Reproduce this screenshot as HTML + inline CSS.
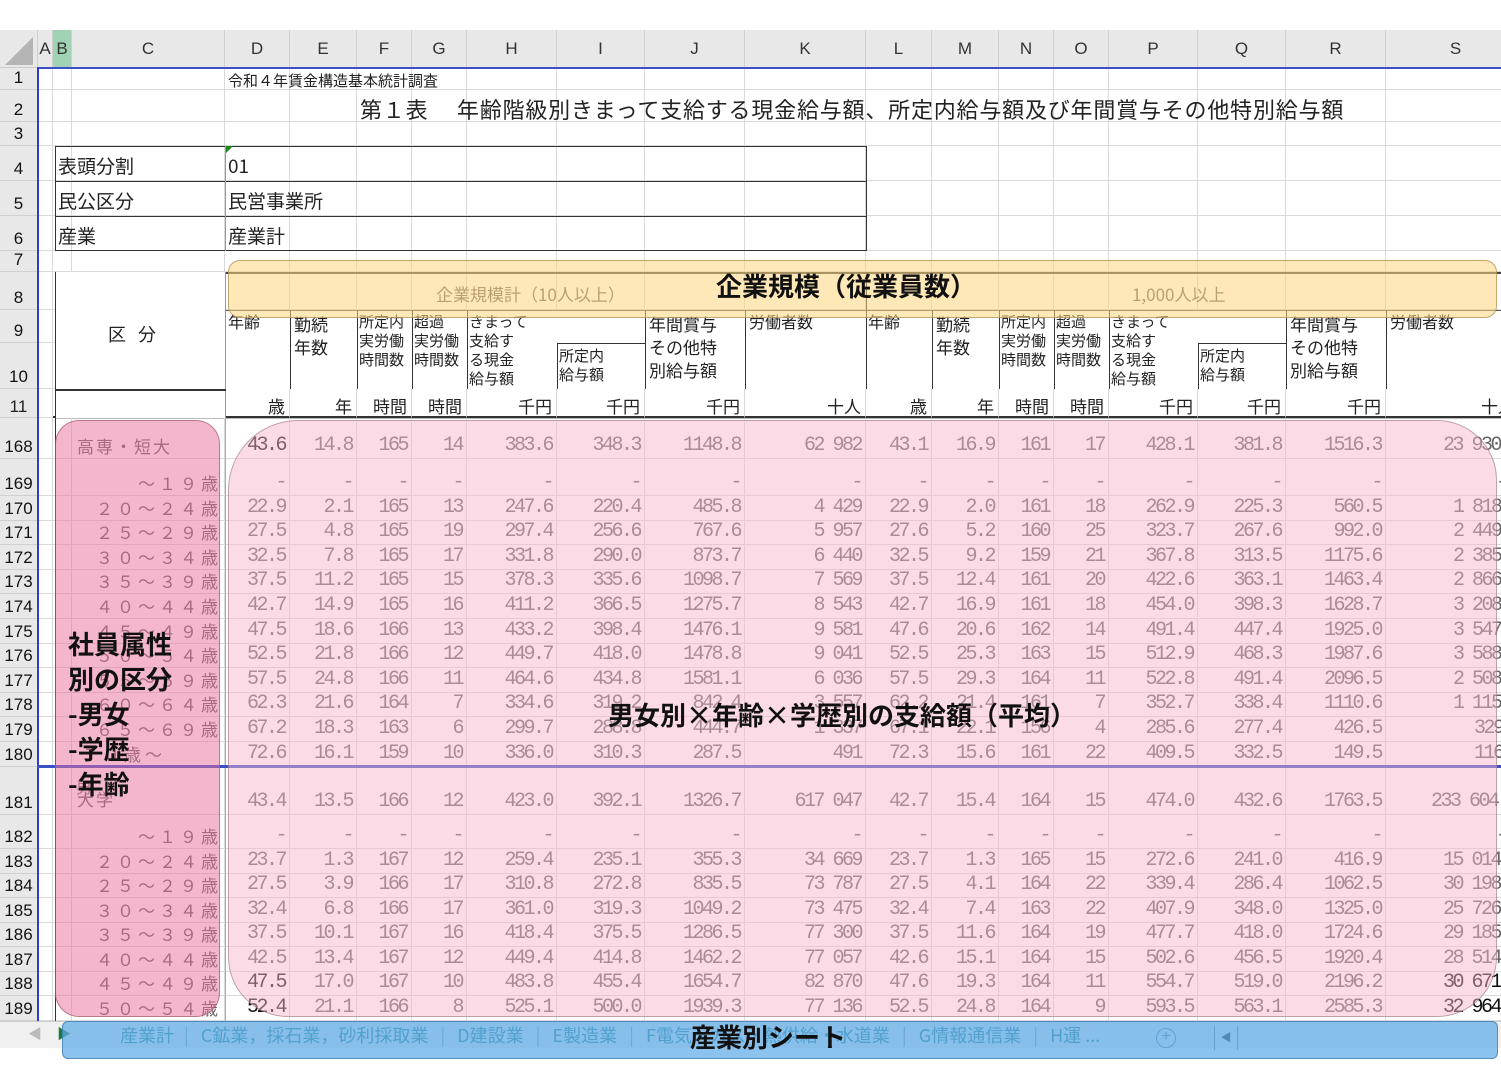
<!DOCTYPE html>
<html><head><meta charset="utf-8">
<style>
*{margin:0;padding:0;box-sizing:border-box}
body{width:1501px;height:1075px;overflow:hidden;background:#fff;position:relative;font-family:"Liberation Sans","Noto Sans CJK JP",sans-serif}
.a{position:absolute}
.hdr{position:absolute;top:30px;left:0;height:38px;width:1501px;background:#e8e8e8;display:flex;border-bottom:1px solid #ccc}
.hdr span{display:flex;align-items:center;justify-content:center;font-size:17px;color:#333;border-right:1px solid #d0d0d0;flex:none}
.r{position:absolute;left:0;display:flex;width:1540px}
.r span{flex:none;border-right:1px solid #dadada;border-bottom:1px solid #dadada;display:flex;align-items:flex-end;justify-content:flex-end;padding:0 4px 2px 0;white-space:nowrap;overflow:hidden;line-height:1;font-family:"Liberation Mono","Noto Sans CJK JP",monospace;font-size:20px;letter-spacing:-2.5px;color:#666}
.r span:nth-child(1){width:38px;background:#e8e8e8;color:#111;font-family:"Liberation Sans",sans-serif;font-size:17px;letter-spacing:0;justify-content:center;padding:0 0 3px 0;border-right:1px solid #bbb;border-bottom:1px solid #d0d0d0}
.w span:nth-child(2),.hdr span:nth-child(2){width:15px}
.w span:nth-child(3),.hdr span:nth-child(3){width:19px}
.w span:nth-child(4),.hdr span:nth-child(4){width:153px}
.w span:nth-child(5),.hdr span:nth-child(5){width:65px}
.w span:nth-child(6),.hdr span:nth-child(6){width:67px}
.w span:nth-child(7),.hdr span:nth-child(7){width:55px}
.w span:nth-child(8),.hdr span:nth-child(8){width:55px}
.w span:nth-child(9),.hdr span:nth-child(9){width:90px}
.w span:nth-child(10),.hdr span:nth-child(10){width:88px}
.w span:nth-child(11),.hdr span:nth-child(11){width:100px}
.w span:nth-child(12),.hdr span:nth-child(12){width:121px}
.w span:nth-child(13),.hdr span:nth-child(13){width:66px}
.w span:nth-child(14),.hdr span:nth-child(14){width:67px}
.w span:nth-child(15),.hdr span:nth-child(15){width:55px}
.w span:nth-child(16),.hdr span:nth-child(16){width:55px}
.w span:nth-child(17),.hdr span:nth-child(17){width:89px}
.w span:nth-child(18),.hdr span:nth-child(18){width:88px}
.w span:nth-child(19),.hdr span:nth-child(19){width:100px}
.w span:nth-child(20),.hdr span:nth-child(20){width:140px}
.hdr span:nth-child(1){width:38px}
.r span.lb{font-family:"Liberation Sans","Noto Sans CJK JP",sans-serif;font-size:17px;letter-spacing:4px;padding-right:2px}
.r span.ll{font-family:"Liberation Sans","Noto Sans CJK JP",sans-serif;font-size:17px;justify-content:flex-start;padding-left:5px;letter-spacing:2px}
.t{font-family:"Noto Sans CJK JP",sans-serif;color:#222}
.hc{position:absolute;font-family:"Noto Sans CJK JP",sans-serif;font-size:15px;line-height:19px;color:#222;padding:2px 0 0 2px}
.u span{font-family:"Noto Sans CJK JP",sans-serif !important;font-size:17px !important;letter-spacing:0 !important;color:#222 !important;border-bottom:2px solid #333 !important;padding-bottom:2px !important}
.big{position:absolute;font-family:"Noto Sans CJK JP",sans-serif;font-weight:bold;font-size:26px;color:#111;line-height:35px}
</style></head><body>

<div class="hdr"><span style="background:#e8e8e8"><svg width="36" height="36"><polygon points="32,6 32,34 4,34" fill="#b5b5b5"/></svg></span><span>A</span><span style="background:#9fd3b3">B</span><span>C</span><span>D</span><span>E</span><span>F</span><span>G</span><span>H</span><span>I</span><span>J</span><span>K</span><span>L</span><span>M</span><span>N</span><span>O</span><span>P</span><span>Q</span><span>R</span><span>S</span></div>

<div class="r w" style="top:68px;height:22px"><span>1</span><span></span><span></span><span></span><span></span><span></span><span></span><span></span><span></span><span></span><span></span><span></span><span></span><span></span><span></span><span></span><span></span><span></span><span></span><span></span></div>
<div class="r w" style="top:90px;height:32px"><span>2</span><span></span><span></span><span></span><span></span><span></span><span></span><span></span><span></span><span></span><span></span><span></span><span></span><span></span><span></span><span></span><span></span><span></span><span></span><span></span></div>
<div class="r w" style="top:122px;height:24px"><span>3</span><span></span><span></span><span></span><span></span><span></span><span></span><span></span><span></span><span></span><span></span><span></span><span></span><span></span><span></span><span></span><span></span><span></span><span></span><span></span></div>
<div class="r w" style="top:146px;height:35px"><span>4</span><span></span><span></span><span></span><span></span><span></span><span></span><span></span><span></span><span></span><span></span><span></span><span></span><span></span><span></span><span></span><span></span><span></span><span></span><span></span></div>
<div class="r w" style="top:181px;height:35px"><span>5</span><span></span><span></span><span></span><span></span><span></span><span></span><span></span><span></span><span></span><span></span><span></span><span></span><span></span><span></span><span></span><span></span><span></span><span></span><span></span></div>
<div class="r w" style="top:216px;height:35px"><span>6</span><span></span><span></span><span></span><span></span><span></span><span></span><span></span><span></span><span></span><span></span><span></span><span></span><span></span><span></span><span></span><span></span><span></span><span></span><span></span></div>
<div class="r w" style="top:251px;height:21px"><span>7</span><span></span><span></span><span></span><span></span><span></span><span></span><span></span><span></span><span></span><span></span><span></span><span></span><span></span><span></span><span></span><span></span><span></span><span></span><span></span></div>
<div class="r w" style="top:272px;height:38px"><span>8</span><span></span><span></span><span></span><span></span><span></span><span></span><span></span><span></span><span></span><span></span><span></span><span></span><span></span><span></span><span></span><span></span><span></span><span></span><span></span></div>
<div class="r w" style="top:310px;height:33px"><span>9</span><span></span><span></span><span></span><span></span><span></span><span></span><span></span><span></span><span></span><span></span><span></span><span></span><span></span><span></span><span></span><span></span><span></span><span></span><span></span></div>
<div class="r w" style="top:343px;height:46px"><span>10</span><span></span><span></span><span></span><span></span><span></span><span></span><span></span><span></span><span></span><span></span><span></span><span></span><span></span><span></span><span></span><span></span><span></span><span></span><span></span></div>
<div class="r w u" style="top:389px;height:29px"><span style="font-family:Liberation Sans !important;border-bottom:1px solid #d0d0d0 !important">11</span><span style="border-bottom:1px solid #dadada !important"></span><span></span><span></span><span>歳</span><span>年</span><span>時間</span><span>時間</span><span>千円</span><span>千円</span><span>千円</span><span>十人</span><span>歳</span><span>年</span><span>時間</span><span>時間</span><span>千円</span><span>千円</span><span>千円</span><span style="justify-content:flex-start;padding-left:95px">十人</span></div>

<div class="a t" style="left:228px;top:70px;font-size:15px">令和４年賃金構造基本統計調査</div>
<div class="a t" style="left:360px;top:93px;font-size:22px;letter-spacing:0.8px;white-space:nowrap">第１表　 年齢階級別きまって支給する現金給与額、所定内給与額及び年間賞与その他特別給与額</div>

<div class="a" style="left:55px;top:146px;width:812px;height:105px;border:1.5px solid #333"></div>
<div class="a" style="left:55px;top:181px;width:812px;border-top:1.5px solid #333"></div>
<div class="a" style="left:55px;top:216px;width:812px;border-top:1.5px solid #333"></div>
<div class="a" style="left:225px;top:146px;height:105px;border-left:1px solid #999"></div>
<div class="a" style="left:226px;top:146px;width:0;height:0;border-top:7px solid #1a8a1a;border-right:7px solid transparent"></div>
<div class="a t" style="left:58px;top:152px;font-size:19px">表頭分割</div>
<div class="a t" style="left:228px;top:152px;font-size:19px">01</div>
<div class="a t" style="left:58px;top:187px;font-size:19px">民公区分</div>
<div class="a t" style="left:228px;top:187px;font-size:19px">民営事業所</div>
<div class="a t" style="left:58px;top:222px;font-size:19px">産業</div>
<div class="a t" style="left:228px;top:222px;font-size:19px">産業計</div>

<div class="a" style="left:55px;top:272px;width:1460px;border-top:2px solid #444"></div>
<div class="a" style="left:55px;top:272px;width:171px;height:146px;border-left:1.5px solid #333;border-right:1px solid #999;background:#fff"></div>
<div class="a t" style="left:108px;top:321px;font-size:18px;letter-spacing:12px">区分</div>
<div class="a" style="left:55px;top:389px;width:171px;border-top:2px solid #333"></div>
<div class="a" style="left:55px;top:418px;width:1460px;border-top:1px solid #bbb"></div>
<div class="a" style="left:226px;top:310px;width:1290px;height:79px;background:#fff;border-top:1px solid #555"></div>
<div class="a" style="left:290px;top:310px;height:79px;border-left:1.5px solid #333"></div>
<div class="a" style="left:357px;top:310px;height:79px;border-left:1.5px solid #333"></div>
<div class="a" style="left:412px;top:310px;height:79px;border-left:1.5px solid #333"></div>
<div class="a" style="left:467px;top:310px;height:79px;border-left:1.5px solid #333"></div>
<div class="a" style="left:557px;top:343px;width:88px;height:46px;border-left:1.5px solid #333;border-top:1.5px solid #333"></div>
<div class="a" style="left:645px;top:310px;height:79px;border-left:1.5px solid #333"></div>
<div class="a" style="left:745px;top:310px;height:79px;border-left:1.5px solid #333"></div>
<div class="a" style="left:866px;top:272px;height:117px;border-left:1.5px solid #333"></div>
<div class="a" style="left:932px;top:310px;height:79px;border-left:1.5px solid #333"></div>
<div class="a" style="left:999px;top:310px;height:79px;border-left:1.5px solid #333"></div>
<div class="a" style="left:1054px;top:310px;height:79px;border-left:1.5px solid #333"></div>
<div class="a" style="left:1109px;top:310px;height:79px;border-left:1.5px solid #333"></div>
<div class="a" style="left:1198px;top:343px;width:88px;height:46px;border-left:1.5px solid #333;border-top:1.5px solid #333"></div>
<div class="a" style="left:1286px;top:310px;height:79px;border-left:1.5px solid #333"></div>
<div class="a" style="left:1386px;top:310px;height:79px;border-left:1.5px solid #333"></div>

<div class="hc" style="left:226px;top:310px;font-size:16px">年齢</div>
<div class="hc" style="left:292px;top:310px;font-size:17px;line-height:23px">勤続<br>年数</div>
<div class="hc" style="left:357px;top:310px">所定内<br>実労働<br>時間数</div>
<div class="hc" style="left:412px;top:310px">超過<br>実労働<br>時間数</div>
<div class="hc" style="left:467px;top:310px">きまって<br>支給す<br>る現金<br>給与額</div>
<div class="hc" style="left:557px;top:344px;font-size:15px">所定内<br>給与額</div>
<div class="hc" style="left:647px;top:310px;font-size:17px;line-height:23px">年間賞与<br>その他特<br>別給与額</div>
<div class="hc" style="left:747px;top:310px;font-size:16px">労働者数</div>
<div class="hc" style="left:866px;top:310px;font-size:16px">年齢</div>
<div class="hc" style="left:934px;top:310px;font-size:17px;line-height:23px">勤続<br>年数</div>
<div class="hc" style="left:999px;top:310px">所定内<br>実労働<br>時間数</div>
<div class="hc" style="left:1054px;top:310px">超過<br>実労働<br>時間数</div>
<div class="hc" style="left:1109px;top:310px">きまって<br>支給す<br>る現金<br>給与額</div>
<div class="hc" style="left:1198px;top:344px">所定内<br>給与額</div>
<div class="hc" style="left:1288px;top:310px;font-size:17px;line-height:23px">年間賞与<br>その他特<br>別給与額</div>
<div class="hc" style="left:1388px;top:310px;font-size:16px">労働者数</div>

<div class="r w" style="top:418px;height:41px"><span>168</span><span></span><span></span><span class="ll">高専・短大</span><span style="color:#111">43.6</span><span>14.8</span><span>165</span><span>14</span><span>383.6</span><span>348.3</span><span>1148.8</span><span>62 982</span><span>43.1</span><span>16.9</span><span>161</span><span>17</span><span>428.1</span><span>381.8</span><span>1516.3</span><span style="justify-content:flex-start;padding-left:57px">23 930</span></div>
<div class="r w" style="top:459px;height:37px"><span>169</span><span></span><span></span><span class="lb">～１９歳</span><span>-</span><span>-</span><span>-</span><span>-</span><span>-</span><span>-</span><span>-</span><span>-</span><span>-</span><span>-</span><span>-</span><span>-</span><span>-</span><span>-</span><span>-</span><span style="justify-content:flex-start;padding-left:110px">-</span></div>
<div class="r w" style="top:496px;height:25px"><span>170</span><span></span><span></span><span class="lb">２０～２４歳</span><span>22.9</span><span>2.1</span><span>165</span><span>13</span><span>247.6</span><span>220.4</span><span>485.8</span><span>4 429</span><span>22.9</span><span>2.0</span><span>161</span><span>18</span><span>262.9</span><span>225.3</span><span>560.5</span><span style="justify-content:flex-start;padding-left:67px">1 818</span></div>
<div class="r w" style="top:521px;height:24px"><span>171</span><span></span><span></span><span class="lb">２５～２９歳</span><span>27.5</span><span>4.8</span><span>165</span><span>19</span><span>297.4</span><span>256.6</span><span>767.6</span><span>5 957</span><span>27.6</span><span>5.2</span><span>160</span><span>25</span><span>323.7</span><span>267.6</span><span>992.0</span><span style="justify-content:flex-start;padding-left:67px">2 449</span></div>
<div class="r w" style="top:545px;height:25px"><span>172</span><span></span><span></span><span class="lb">３０～３４歳</span><span>32.5</span><span>7.8</span><span>165</span><span>17</span><span>331.8</span><span>290.0</span><span>873.7</span><span>6 440</span><span>32.5</span><span>9.2</span><span>159</span><span>21</span><span>367.8</span><span>313.5</span><span>1175.6</span><span style="justify-content:flex-start;padding-left:67px">2 385</span></div>
<div class="r w" style="top:570px;height:24px"><span>173</span><span></span><span></span><span class="lb">３５～３９歳</span><span>37.5</span><span>11.2</span><span>165</span><span>15</span><span>378.3</span><span>335.6</span><span>1098.7</span><span>7 569</span><span>37.5</span><span>12.4</span><span>161</span><span>20</span><span>422.6</span><span>363.1</span><span>1463.4</span><span style="justify-content:flex-start;padding-left:67px">2 866</span></div>
<div class="r w" style="top:594px;height:25px"><span>174</span><span></span><span></span><span class="lb">４０～４４歳</span><span>42.7</span><span>14.9</span><span>165</span><span>16</span><span>411.2</span><span>366.5</span><span>1275.7</span><span>8 543</span><span>42.7</span><span>16.9</span><span>161</span><span>18</span><span>454.0</span><span>398.3</span><span>1628.7</span><span style="justify-content:flex-start;padding-left:67px">3 208</span></div>
<div class="r w" style="top:619px;height:25px"><span>175</span><span></span><span></span><span class="lb">４５～４９歳</span><span>47.5</span><span>18.6</span><span>166</span><span>13</span><span>433.2</span><span>398.4</span><span>1476.1</span><span>9 581</span><span>47.6</span><span>20.6</span><span>162</span><span>14</span><span>491.4</span><span>447.4</span><span>1925.0</span><span style="justify-content:flex-start;padding-left:67px">3 547</span></div>
<div class="r w" style="top:644px;height:24px"><span>176</span><span></span><span></span><span class="lb">５０～５４歳</span><span>52.5</span><span>21.8</span><span>166</span><span>12</span><span>449.7</span><span>418.0</span><span>1478.8</span><span>9 041</span><span>52.5</span><span>25.3</span><span>163</span><span>15</span><span>512.9</span><span>468.3</span><span>1987.6</span><span style="justify-content:flex-start;padding-left:67px">3 588</span></div>
<div class="r w" style="top:668px;height:25px"><span>177</span><span></span><span></span><span class="lb">５５～５９歳</span><span>57.5</span><span>24.8</span><span>166</span><span>11</span><span>464.6</span><span>434.8</span><span>1581.1</span><span>6 036</span><span>57.5</span><span>29.3</span><span>164</span><span>11</span><span>522.8</span><span>491.4</span><span>2096.5</span><span style="justify-content:flex-start;padding-left:67px">2 508</span></div>
<div class="r w" style="top:693px;height:24px"><span>178</span><span></span><span></span><span class="lb">６０～６４歳</span><span>62.3</span><span>21.6</span><span>164</span><span>7</span><span>334.6</span><span>319.2</span><span>842.4</span><span>3 557</span><span>62.2</span><span>21.4</span><span>161</span><span>7</span><span>352.7</span><span>338.4</span><span>1110.6</span><span style="justify-content:flex-start;padding-left:67px">1 115</span></div>
<div class="r w" style="top:717px;height:25px"><span>179</span><span></span><span></span><span class="lb">６５～６９歳</span><span>67.2</span><span>18.3</span><span>163</span><span>6</span><span>299.7</span><span>288.8</span><span>444.7</span><span>1 337</span><span>67.1</span><span>22.1</span><span>156</span><span>4</span><span>285.6</span><span>277.4</span><span>426.5</span><span style="justify-content:flex-start;padding-left:88px">329</span></div>
<div class="r w" style="top:742px;height:25px"><span>180</span><span></span><span></span><span class="lb" style="justify-content:flex-start;padding-left:10px">７０歳～</span><span>72.6</span><span>16.1</span><span>159</span><span>10</span><span>336.0</span><span>310.3</span><span>287.5</span><span>491</span><span>72.3</span><span>15.6</span><span>161</span><span>22</span><span>409.5</span><span>332.5</span><span>149.5</span><span style="justify-content:flex-start;padding-left:88px">116</span></div>
<div class="r w" style="top:767px;height:48px"><span>181</span><span></span><span></span><span class="ll" style="padding-bottom:5px">大学</span><span>43.4</span><span>13.5</span><span>166</span><span>12</span><span>423.0</span><span>392.1</span><span>1326.7</span><span>617 047</span><span>42.7</span><span>15.4</span><span>164</span><span>15</span><span>474.0</span><span>432.6</span><span>1763.5</span><span style="justify-content:flex-start;padding-left:45px">233 604</span></div>
<div class="r w" style="top:815px;height:34px"><span>182</span><span></span><span></span><span class="lb">～１９歳</span><span>-</span><span>-</span><span>-</span><span>-</span><span>-</span><span>-</span><span>-</span><span>-</span><span>-</span><span>-</span><span>-</span><span>-</span><span>-</span><span>-</span><span>-</span><span style="justify-content:flex-start;padding-left:110px">-</span></div>
<div class="r w" style="top:849px;height:25px"><span>183</span><span></span><span></span><span class="lb">２０～２４歳</span><span>23.7</span><span>1.3</span><span>167</span><span>12</span><span>259.4</span><span>235.1</span><span>355.3</span><span>34 669</span><span>23.7</span><span>1.3</span><span>165</span><span>15</span><span>272.6</span><span>241.0</span><span>416.9</span><span style="justify-content:flex-start;padding-left:57px">15 014</span></div>
<div class="r w" style="top:874px;height:24px"><span>184</span><span></span><span></span><span class="lb">２５～２９歳</span><span>27.5</span><span>3.9</span><span>166</span><span>17</span><span>310.8</span><span>272.8</span><span>835.5</span><span>73 787</span><span>27.5</span><span>4.1</span><span>164</span><span>22</span><span>339.4</span><span>286.4</span><span>1062.5</span><span style="justify-content:flex-start;padding-left:57px">30 198</span></div>
<div class="r w" style="top:898px;height:25px"><span>185</span><span></span><span></span><span class="lb">３０～３４歳</span><span>32.4</span><span>6.8</span><span>166</span><span>17</span><span>361.0</span><span>319.3</span><span>1049.2</span><span>73 475</span><span>32.4</span><span>7.4</span><span>163</span><span>22</span><span>407.9</span><span>348.0</span><span>1325.0</span><span style="justify-content:flex-start;padding-left:57px">25 726</span></div>
<div class="r w" style="top:923px;height:24px"><span>186</span><span></span><span></span><span class="lb">３５～３９歳</span><span>37.5</span><span>10.1</span><span>167</span><span>16</span><span>418.4</span><span>375.5</span><span>1286.5</span><span>77 300</span><span>37.5</span><span>11.6</span><span>164</span><span>19</span><span>477.7</span><span>418.0</span><span>1724.6</span><span style="justify-content:flex-start;padding-left:57px">29 185</span></div>
<div class="r w" style="top:947px;height:25px"><span>187</span><span></span><span></span><span class="lb">４０～４４歳</span><span>42.5</span><span>13.4</span><span>167</span><span>12</span><span>449.4</span><span>414.8</span><span>1462.2</span><span>77 057</span><span>42.6</span><span>15.1</span><span>164</span><span>15</span><span>502.6</span><span>456.5</span><span>1920.4</span><span style="justify-content:flex-start;padding-left:57px">28 514</span></div>
<div class="r w" style="top:972px;height:24px"><span>188</span><span></span><span></span><span class="lb">４５～４９歳</span><span style="color:#111">47.5</span><span>17.0</span><span>167</span><span>10</span><span>483.8</span><span>455.4</span><span>1654.7</span><span>82 870</span><span>47.6</span><span>19.3</span><span>164</span><span>11</span><span>554.7</span><span>519.0</span><span>2196.2</span><span style="justify-content:flex-start;padding-left:57px;color:#111">30 671</span></div>
<div class="r w" style="top:996px;height:25px"><span>189</span><span></span><span></span><span class="lb">５０～５４歳</span><span style="color:#111">52.4</span><span>21.1</span><span>166</span><span>8</span><span>525.1</span><span>500.0</span><span>1939.3</span><span>77 136</span><span>52.5</span><span>24.8</span><span>164</span><span>9</span><span>593.5</span><span>563.1</span><span>2585.3</span><span style="justify-content:flex-start;padding-left:57px;color:#111">32 964</span></div>

<div class="a" style="left:55px;top:418px;height:603px;border-left:1.5px solid #333"></div>
<div class="a" style="left:225px;top:418px;height:603px;border-left:1px solid #aaa"></div>
<div class="a t" style="left:76px;top:774px;font-size:16px;color:#777">男</div>

<div class="a" style="left:37px;top:67px;width:1464px;height:2px;background:#3b4fc8"></div>
<div class="a" style="left:37px;top:67px;width:2px;height:954px;background:#2a3fd0"></div>
<div class="a" style="left:37px;top:765px;width:1464px;height:3px;background:#3b4fc8"></div>

<div class="a" style="left:0;top:1021px;width:1501px;height:27px;background:#f0f0f0;border-top:1px solid #ccc"></div>
<div class="a t" style="left:28px;top:1024px;font-size:14px;color:#bbb">◀</div>
<div class="a t" style="left:57px;top:1024px;font-size:14px;color:#1a7a3a">▶</div>
<div class="a t" style="left:110px;top:1022px;font-size:18px;color:#2a8a8a;white-space:nowrap">
<span style="padding:0 10px">産業計</span><span style="color:#8aa">|</span><span style="padding:0 12px">C鉱業，採石業，砂利採取業</span><span style="color:#8aa">|</span><span style="padding:0 12px">D建設業</span><span style="color:#8aa">|</span><span style="padding:0 12px">E製造業</span><span style="color:#8aa">|</span><span style="padding:0 12px">F電気・ガス・熱供給・水道業</span><span style="color:#8aa">|</span><span style="padding:0 12px">G情報通信業</span><span style="color:#8aa">|</span><span style="padding:0 12px">H運 ...</span></div>
<div class="a" style="left:1156px;top:1028px;width:20px;height:20px;border:1.5px solid #5a8aaa;border-radius:50%;color:#5a8aaa;font-size:16px;line-height:16px;text-align:center">+</div>
<div class="a" style="left:1214px;top:1026px;width:24px;height:24px;border-left:1px solid #888;border-right:1px solid #888;font-size:11px;text-align:center;line-height:24px;color:#333">◀</div>

<div class="a" style="left:228px;top:260px;width:1269px;height:58px;border-radius:12px;background:rgba(253,214,125,0.55);border:1px solid rgba(170,140,80,0.7)"></div>
<div class="a t" style="left:436px;top:281px;font-size:17px;color:#b9a070">企業規模計（10人以上）</div>
<div class="a t" style="left:1132px;top:281px;font-size:17px;color:#b9a070">1,000人以上</div>
<div class="big" style="left:716px;top:268px">企業規模（従業員数）</div>

<div class="a" style="left:55px;top:420px;width:165px;height:597px;border-radius:24px;background:rgba(232,110,155,0.5);border:1px solid rgba(150,80,100,0.6)"></div>
<div class="a" style="left:228px;top:420px;width:1269px;height:597px;border-radius:70px 60px 60px 60px;background:rgba(246,182,202,0.48);border:1px solid rgba(150,120,130,0.6)"></div>
<div class="big" style="left:68px;top:626px">社員属性<br>別の区分<br>-男女<br>-学歴<br>-年齢</div>
<div class="big" style="left:608px;top:697px">男女別×年齢×学歴別の支給額（平均）</div>

<div class="a" style="left:62px;top:1021px;width:1436px;height:38px;border-radius:6px;background:rgba(95,170,232,0.72);border:1px solid rgba(60,120,170,0.7)"></div>
<div class="big" style="left:690px;top:1019px">産業別シート</div>
</body></html>
